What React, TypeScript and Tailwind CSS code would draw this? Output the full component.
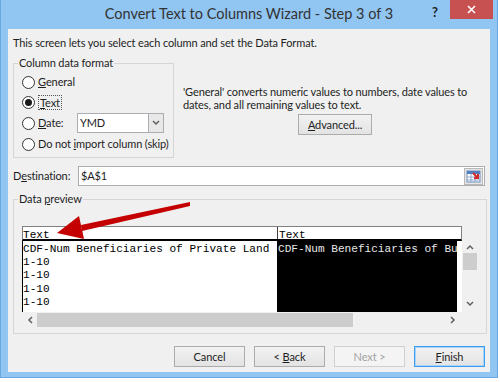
import type { ReactNode } from "react";

const ui = "font-['Lato',sans-serif] text-[11px] tracking-[-0.12px] text-[#1e1e1e]";
const mono = "font-['Liberation_Mono',monospace] text-[11.1px] tracking-normal";

function Btn({ children, className = "" }: { children: ReactNode; className?: string }) {
  return (
    <div
      className={`flex h-[21px] items-center justify-center border bg-linear-to-b from-[#f2f2f2] to-[#e3e3e3] leading-none ${className}`}
    >
      {children}
    </div>
  );
}

function Radio({ checked, children, className = "" }: { checked?: boolean; children: ReactNode; className?: string }) {
  return (
    <div className={`flex items-center whitespace-nowrap ${className}`}>
      <span className="flex h-[13px] w-[13px] shrink-0 items-center justify-center rounded-full border border-[#333] bg-white">
        {checked && <span className="h-[7px] w-[7px] rounded-full bg-[#1a1a1a]" />}
      </span>
      <span className="ml-[3px] flex items-center">{children}</span>
    </div>
  );
}

function Chevron({ dir }: { dir: "up" | "down" | "left" | "right" }) {
  const d = {
    up: "M1 5 L4 2 L7 5",
    down: "M1 2 L4 5 L7 2",
    left: "M5 1 L2 4 L5 7",
    right: "M2 1 L5 4 L2 7",
  }[dir];
  return (
    <svg width="8" height="8" viewBox="0 0 8 8">
      <path d={d} fill="none" stroke="#606060" strokeWidth="1.5" />
    </svg>
  );
}

function RefIcon() {
  return (
    <svg width="16" height="15" viewBox="0 0 16 15">
      <rect x="1" y="2" width="13" height="11" fill="#fff" stroke="#6f8fb8" />
      <rect x="1" y="2" width="13" height="3" fill="#4f7fc0" />
      <path d="M1 8 H14 M1 11 H14 M5 5 V13 M9 5 V13" stroke="#8fa9cc" strokeWidth="1" />
      <path d="M7 4 L12 9 M12 5 V9 H8" fill="none" stroke="#d42a2a" strokeWidth="2" />
    </svg>
  );
}

export default function App() {
  return (
    <div className={`relative h-[382px] w-[500px] overflow-hidden bg-white ${ui}`}>
      <div className="flex h-[378px] w-[498px] flex-col border-x border-b border-[#6aa8e2] bg-[#91c5f2]">
        {/* title bar */}
        <div className="relative flex h-[29px] items-center justify-center">
          <span className="-mt-[1px] text-[14.5px] tracking-normal text-[#333]">
            Convert Text to Columns Wizard - Step 3 of 3
          </span>
          <span className="absolute left-[431px] top-[3px] text-[13px] font-bold text-[#222]">?</span>
          <div className="absolute right-[4px] top-0 flex h-[19px] w-[43px] items-center justify-center bg-[#c75050]">
            <svg width="9" height="9" viewBox="0 0 9 9">
              <path d="M1 1 L8 8 M8 1 L1 8" stroke="#fff" strokeWidth="1.6" />
            </svg>
          </div>
        </div>

        {/* client area */}
        <div className="mx-[7px] flex h-[343px] flex-col bg-[#f0f0f0] px-[5px]">
          <div className="pt-[6px] leading-[16px]">This screen lets you select each column and set the Data Format.</div>

          <div className="mt-[12px] flex">
            <div className="flex h-[95px] w-[161px] shrink-0 flex-col border border-[#d5d5d5]">
              <span className="-mt-[8px] ml-[4px] w-fit bg-[#f0f0f0] px-px leading-[14px]">Column data format</span>
              <div className="flex flex-col pl-[8px] pt-[3px]">
                <Radio className="h-[19px]">
                  <u>G</u>eneral
                </Radio>
                <Radio checked className="h-[20px]">
                  <span className="border border-dotted border-[#555] px-px leading-[13px]">
                    <u>T</u>ext
                  </span>
                </Radio>
                <Radio className="h-[22px]">
                  <span className="inline-block w-[38px]">
                    <u>D</u>ate:
                  </span>
                  <span className="ml-px flex h-[20px] w-[87px] items-center border border-[#abadb3] bg-white">
                    <span className="flex-1 pl-[2px]">YMD</span>
                    <span className="flex h-full w-[15px] items-center justify-center border-l border-[#abadb3] bg-[#e8e8e8]">
                      <Chevron dir="down" />
                    </span>
                  </span>
                </Radio>
                <Radio className="h-[20px]">
                  <span>
                    Do not <u>i</u>mport column (skip)
                  </span>
                </Radio>
              </div>
            </div>

            <div className="ml-[9px] flex flex-col pt-[22px]">
              <div className="whitespace-nowrap leading-[13px]">
                'General' converts numeric values to numbers, date values to
                <br />
                dates, and all remaining values to text.
              </div>
              <Btn className="ml-[115px] mt-[3px] w-[74px] border-[#acacac]">
                <span>
                  <u>A</u>dvanced...
                </span>
              </Btn>
            </div>
          </div>

          <div className="mt-[8px] flex h-[20px] items-center">
            <span className="w-[65px]">
              D<u>e</u>stination:
            </span>
            <div className="flex h-[20px] w-[407px] items-center border border-[#abadb3] bg-white">
              <span className="flex-1 pl-[2px]">$A$1</span>
              <span className="mr-px flex h-[17px] w-[19px] items-center justify-center border border-[#b8b8b8] bg-[#e6e6e6]">
                <RefIcon />
              </span>
            </div>
          </div>

          <div className="mt-[13px] flex h-[135px] w-[474px] flex-col border border-[#d5d5d5]">
            <span className="-mt-[8px] ml-[4px] w-fit bg-[#f0f0f0] px-px leading-[14px]">
              Data <u>p</u>review
            </span>
            <div className={`ml-[8px] mt-[20px] flex flex-col ${mono} text-black`}>
              <div className="flex h-[15px] w-[440px] border-x border-t border-b-2 border-x-[#808080] border-t-[#808080] border-b-black bg-white leading-[13px]">
                <span className="w-[255px] border-r border-[#404040] pt-[2px]">Text</span>
                <span className="pt-[2px] pl-px">Text</span>
              </div>
              <div className="flex">
                <div className="flex h-[71px] w-[440px] overflow-hidden border-l border-black bg-white leading-[13.4px]">
                  <div className="w-[254px] shrink-0 whitespace-nowrap pt-[1.5px]">
                    <div>CDF-Num Beneficiaries of Private Land</div>
                    <div>1-10</div>
                    <div>1-10</div>
                    <div>1-10</div>
                    <div>1-10</div>
                  </div>
                  <div className="w-[180px] shrink-0 overflow-hidden whitespace-nowrap bg-black pl-px pt-[1.5px] text-[#e8e8e8]">
                    CDF-Num Beneficiaries of Bu
                  </div>
                </div>
                <div className="ml-px flex h-[71px] w-[14px] flex-col items-center">
                  <div className="mt-[3px]">
                    <Chevron dir="up" />
                  </div>
                  <div className="mt-px h-[17px] w-[14px] bg-[#cdcdcd]" />
                  <div className="flex-1" />
                  <div className="mb-[4px]">
                    <Chevron dir="down" />
                  </div>
                </div>
              </div>
              <div className="mt-px flex h-[14px] w-[440px] items-center">
                <div className="ml-[5px]">
                  <Chevron dir="left" />
                </div>
                <div className="ml-[2px] h-[14px] w-[316px] bg-[#cdcdcd]" />
                <div className="flex-1" />
                <div className="mr-[5px]">
                  <Chevron dir="right" />
                </div>
              </div>
            </div>
          </div>

          <div className="mt-[12px] flex justify-end gap-[9px]">
            <Btn className="w-[71px] border-[#acacac]">Cancel</Btn>
            <Btn className="w-[71px] border-[#acacac]">
              <span>
                &lt; <u>B</u>ack
              </span>
            </Btn>
            <Btn className="w-[71px] border-[#d0d0d0] from-[#f4f4f4] to-[#f4f4f4] text-[#a3a3a3]">
              <span>Next &gt;</span>
            </Btn>
            <Btn className="w-[71px] border-[#3c9cf0] ring-1 ring-inset ring-[#a8d4fa]">
              <span>
                <u>F</u>inish
              </span>
            </Btn>
          </div>
        </div>
      </div>

      {/* annotation arrow */}
      <svg className="pointer-events-none absolute left-0 top-0" width="500" height="382">
        <path d="M190 202 L190 206 L82 231 L81 225 Z" fill="#c40000" />
        <polygon points="57,233 84,239 79,216" fill="#c40000" />
      </svg>
    </div>
  );
}
